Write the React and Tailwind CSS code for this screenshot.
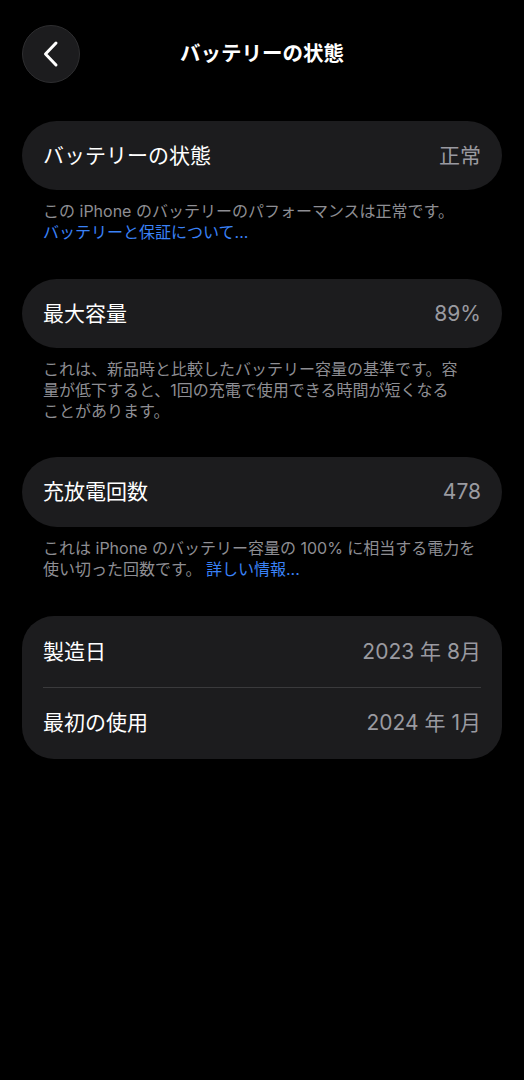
import React from 'react';

const font = { fontFamily: '"Inter", "Noto Sans CJK JP", sans-serif' };

function Row({ label, value, tall }) {
    return (
        <div className={`flex items-center justify-between px-[21px] ${tall ? 'h-[70px]' : 'h-[69px]'}`}>
            <span className="text-[21px] text-white">{label}</span>
            <span className="text-[21px] text-[#9a9aa0]">{value}</span>
        </div>
    );
}

function Note({ children }) {
    return (
        <p className="px-[21px] pt-[11px] text-[16px] leading-[21px] text-[#8e8e93] whitespace-nowrap">
            {children}
        </p>
    );
}

export default function App() {
    return (
        <div className="min-h-screen bg-black px-[22px] pt-[25px]" style={font}>
            {/* header */}
            <div className="grid grid-cols-[58px_1fr_58px] items-center h-[58px]">
                <button className="w-[58px] h-[58px] rounded-full bg-[#1c1c1e] border border-[#2e2e30] flex items-center justify-center">
                    <svg width="16" height="28" viewBox="0 0 16 28" fill="none">
                        <path d="M13 3 L2.5 14 L13 25" stroke="white" strokeWidth="3" strokeLinecap="round" strokeLinejoin="round" />
                    </svg>
                </button>
                <h1 className="text-center text-[20.5px] font-bold text-white">バッテリーの状態</h1>
                <div />
            </div>

            <div className="mt-[38px]">
                <div className="rounded-full bg-[#1c1c1e]">
                    <Row label="バッテリーの状態" value="正常" />
                </div>
                <Note>
                    この iPhone のバッテリーのパフォーマンスは正常です。<br />
                    <span className="text-[#3a82f7]">バッテリーと保証について...</span>
                </Note>
            </div>

            <div className="mt-[36px]">
                <div className="rounded-full bg-[#1c1c1e]">
                    <Row label="最大容量" value="89%" />
                </div>
                <Note>
                    これは、新品時と比較したバッテリー容量の基準です。容<br />
                    量が低下すると、1回の充電で使用できる時間が短くなる<br />
                    ことがあります。
                </Note>
            </div>

            <div className="mt-[35px]">
                <div className="rounded-full bg-[#1c1c1e]">
                    <Row label="充放電回数" value="478" tall />
                </div>
                <Note>
                    これは iPhone のバッテリー容量の 100% に相当する電力を<br />
                    使い切った回数です。 <span className="text-[#3a82f7]">詳しい情報...</span>
                </Note>
            </div>

            <div className="mt-[36px] rounded-[32px] bg-[#1c1c1e] py-[1px]">
                <Row label="製造日" value="2023 年 8月" tall />
                <div className="mx-[21px] h-px bg-[#3a3a3c]" />
                <Row label="最初の使用" value="2024 年 1月" tall />
            </div>
        </div>
    );
}
